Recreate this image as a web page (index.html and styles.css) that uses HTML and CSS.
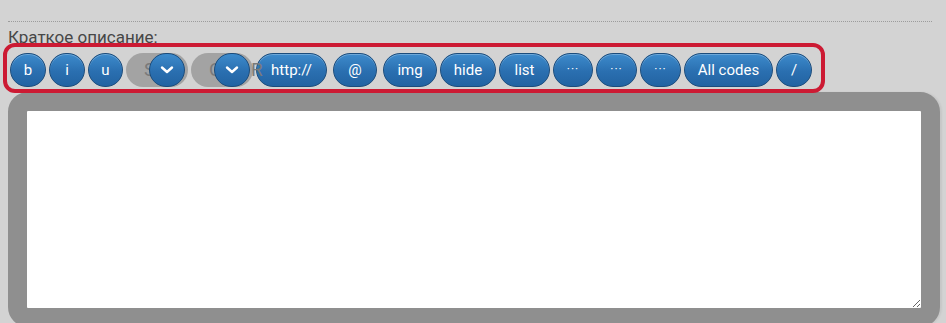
FILE: index.html
```html
<!DOCTYPE html>
<html lang="ru">

<head>
   <meta charset="UTF-8">
   <title>Краткое описание</title>
   <link rel="stylesheet" href="styles.css">
</head>

<body>
   <div class="divider"></div>

   <!-- Поле краткого описания -->
   <label class="field-label" for="shortDesc">Краткое описание:</label>

   <!-- Панель BB-кодов -->
   <div class="toolbar">
      <button class="bb w36">b</button>
      <button class="bb w36">i</button>
      <button class="bb w35">u</button>
      <div class="bb-select">
         <span class="sel-text">S</span>
         <span class="sel-arrow">
            <svg width="14" height="10" viewBox="0 0 14 10"><path d="M2 2.5 L7 7 L12 2.5" fill="none" stroke="#fff" stroke-width="2.4" stroke-linecap="round" stroke-linejoin="round"/></svg>
         </span>
      </div>
      <div class="bb-select">
         <span class="sel-text">C</span>
         <span class="sel-arrow">
            <svg width="14" height="10" viewBox="0 0 14 10"><path d="M2 2.5 L7 7 L12 2.5" fill="none" stroke="#fff" stroke-width="2.4" stroke-linecap="round" stroke-linejoin="round"/></svg>
         </span>
         <span class="sel-tail">R</span>
      </div>
      <button class="bb w71">http://</button>
      <button class="bb w44 ml3">@</button>
      <button class="bb w54 ml3">img</button>
      <button class="bb w56">hide</button>
      <button class="bb w51">list</button>
      <button class="bb w40 dots">···</button>
      <button class="bb w41 dots">···</button>
      <button class="bb w41 dots">···</button>
      <button class="bb w89">All codes</button>
      <button class="bb w36">/</button>
   </div>

   <textarea id="shortDesc" class="editor"></textarea>
</body>

</html>
```

FILE: styles.css
```css
/* Общий фон */
body {
   margin: 0;
   padding: 0 8px;
   background: #d3d3d3;
   font-family: Roboto, "Noto Sans", sans-serif;
   overflow: hidden;
}

/* Пунктирная линия сверху */
.divider {
   margin: 21px 6px 0 0;
   border-top: 1px dotted #9c9c9c;
}

/* Подпись поля */
.field-label {
   display: block;
   margin-top: 5px;
   font-size: 17px;
   line-height: 20px;
   color: #474747;
}

/* Панель кнопок */
.toolbar {
   position: relative;
   box-sizing: border-box;
   width: 822px;
   margin: -4px 0 0 -5px;
   padding: 6px 3px 2px;
   border: 4px solid #cc1a33;
   border-radius: 12px;
   display: flex;
   gap: 3px;
}

.bb {
   box-sizing: border-box;
   height: 34px;
   padding: 0;
   border: 1px solid #1b4c7c;
   border-radius: 18px;
   background: linear-gradient(#3d8bcc, #2a6fb0 55%, #2263a2);
   color: #fff;
   font-family: Roboto, "Noto Sans", sans-serif;
   font-size: 15px;
   box-shadow: inset 0 1px 0 rgba(255, 255, 255, 0.25);
}

.bb.dots {
   font-size: 12px;
   letter-spacing: 1px;
   padding-bottom: 3px;
}

.w35 { width: 35px; }
.w36 { width: 36px; }
.w40 { width: 40px; }
.w41 { width: 41px; }
.w44 { width: 44px; }
.w51 { width: 51px; }
.w54 { width: 54px; }
.w56 { width: 56px; }
.w71 { width: 71px; }
.w89 { width: 89px; }
.ml3 { margin-left: 3px; }

/* Выпадающие списки */
.bb-select {
   position: relative;
   box-sizing: border-box;
   width: 62px;
   height: 34px;
   border-radius: 17px;
   background: #a3a3a3;
   color: #7a7a7a;
   font-size: 19px;
   line-height: 34px;
   padding-left: 18px;
}

.sel-arrow {
   position: absolute;
   top: 0;
   left: 23px;
   box-sizing: border-box;
   width: 36px;
   height: 34px;
   border: 1px solid #1b4c7c;
   border-radius: 18px;
   background: linear-gradient(#3d8bcc, #2a6fb0 55%, #2263a2);
   display: flex;
   align-items: center;
   justify-content: center;
}

.sel-tail {
   position: absolute;
   top: 0;
   left: 60px;
}

/* Поле ввода */
.editor {
   display: block;
   box-sizing: border-box;
   width: 932px;
   height: 235px;
   margin-top: -1px;
   border: 19px solid #8f8f8f;
   border-radius: 20px;
   background: #fff;
   outline: none;
   box-shadow: 2px 0 2px rgba(0, 0, 0, 0.06);
}
```
